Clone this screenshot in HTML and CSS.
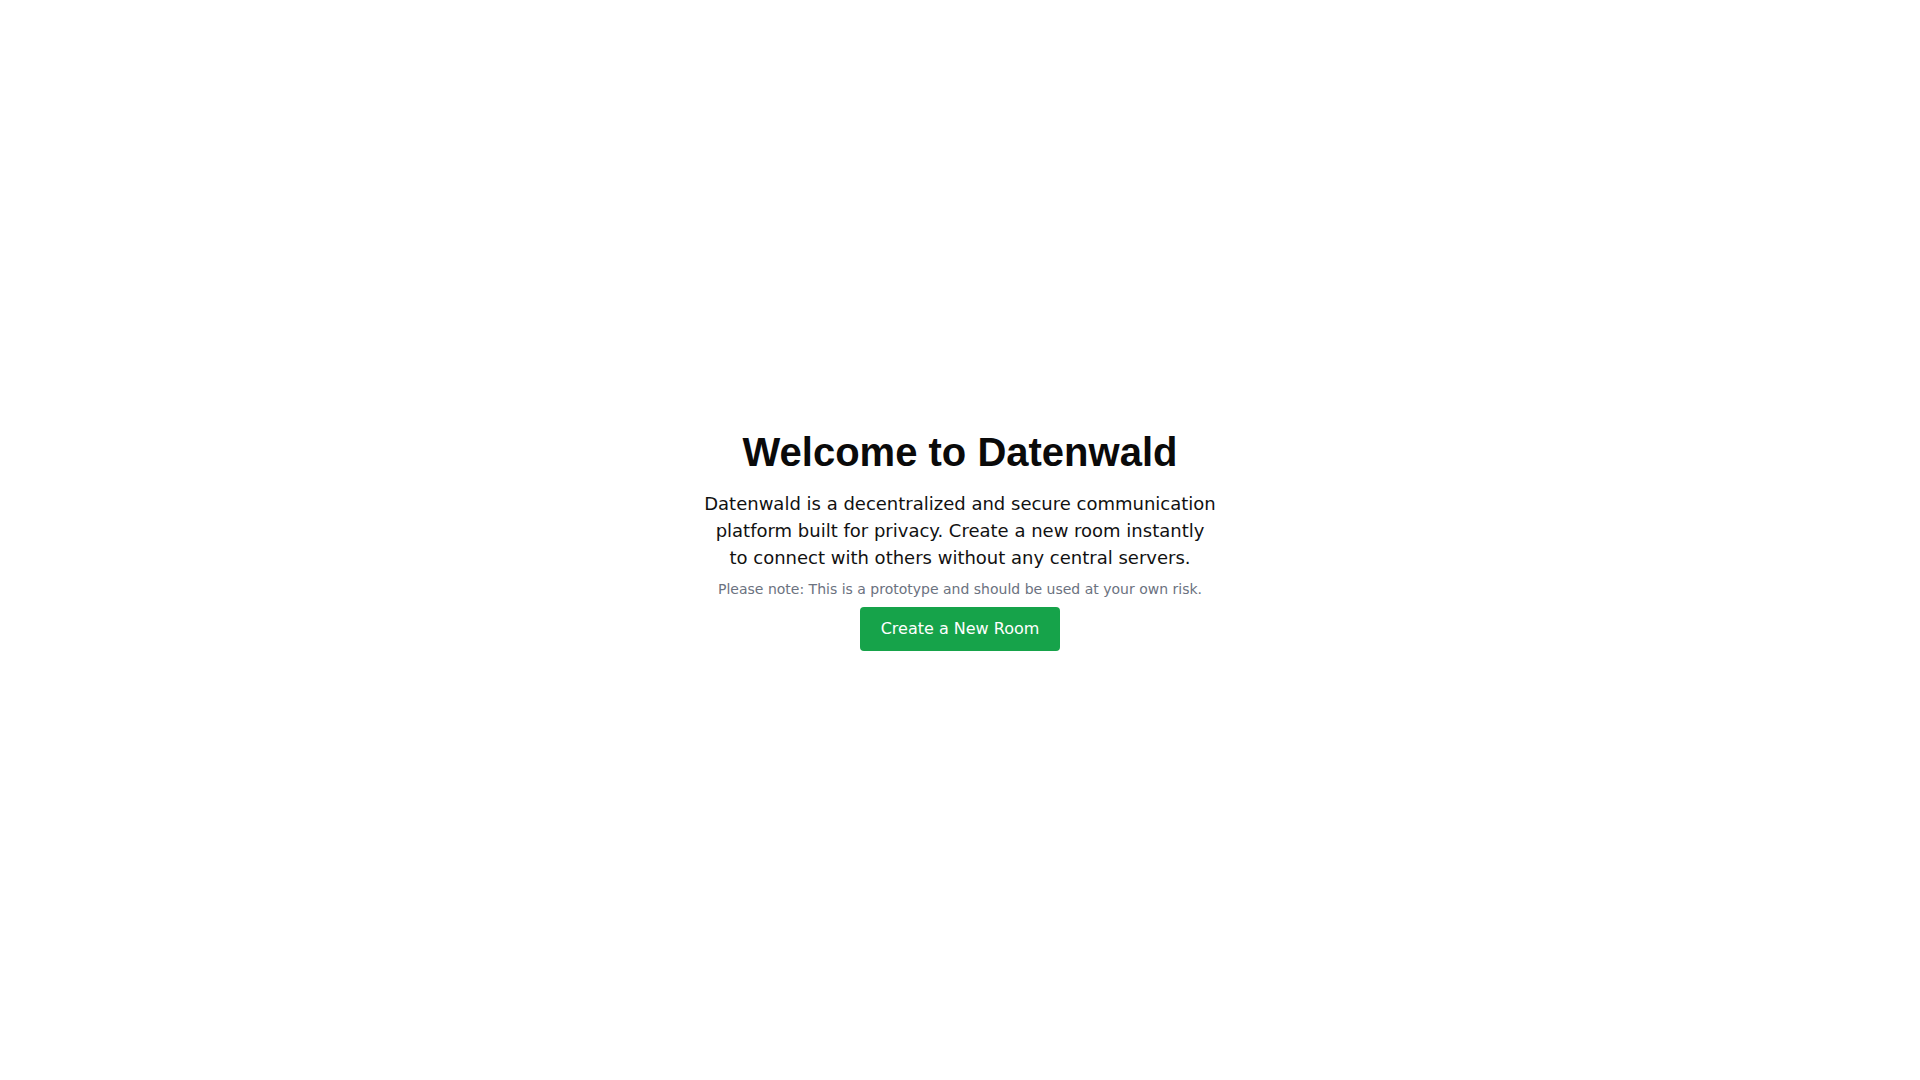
FILE: index.html
```html
<!DOCTYPE html>
<html lang="en">
<head>
<meta charset="utf-8">
<title>Datenwald</title>
<link rel="stylesheet" href="styles.css">
</head>
<body>
<main class="page">
  <section class="hero">
    <h1 class="title">Welcome to Datenwald</h1>
    <p class="lead">Datenwald is a decentralized and secure communication platform built for privacy. Create a new room instantly to connect with others without any central servers.</p>
    <p class="note">Please note: This is a prototype and should be used at your own risk.</p>
    <button class="cta" type="button">Create a New Room</button>
  </section>
</main>
</body>
</html>
```

FILE: styles.css
```css
* { box-sizing: border-box; }
html, body { margin: 0; padding: 0; }
body {
  background: #ffffff;
  font-family: "DejaVu Sans", sans-serif;
  color: #111111;
}
.page {
  min-height: 100vh;
  display: flex;
  align-items: center;
  justify-content: center;
}
.hero {
  display: flex;
  flex-direction: column;
  align-items: center;
  text-align: center;
  max-width: 512px;
  margin-top: -2px;
}
.title {
  margin: 0 0 14px 0;
  font-family: "Liberation Sans", Arial, sans-serif;
  font-weight: 700;
  font-size: 40px;
  line-height: 48px;
  color: #0a0a0a;
}
.lead {
  margin: 0 0 8px 0;
  font-size: 18px;
  line-height: 27px;
  color: #111111;
}
.note {
  margin: 0 0 8px 0;
  font-size: 14px;
  line-height: 20px;
  color: #6b7280;
}
.cta {
  font-family: "DejaVu Sans", sans-serif;
  font-size: 16px;
  line-height: 24px;
  padding: 10px 21px;
  border: none;
  border-radius: 4px;
  background: #16a34a;
  color: #ffffff;
  cursor: pointer;
}
```
